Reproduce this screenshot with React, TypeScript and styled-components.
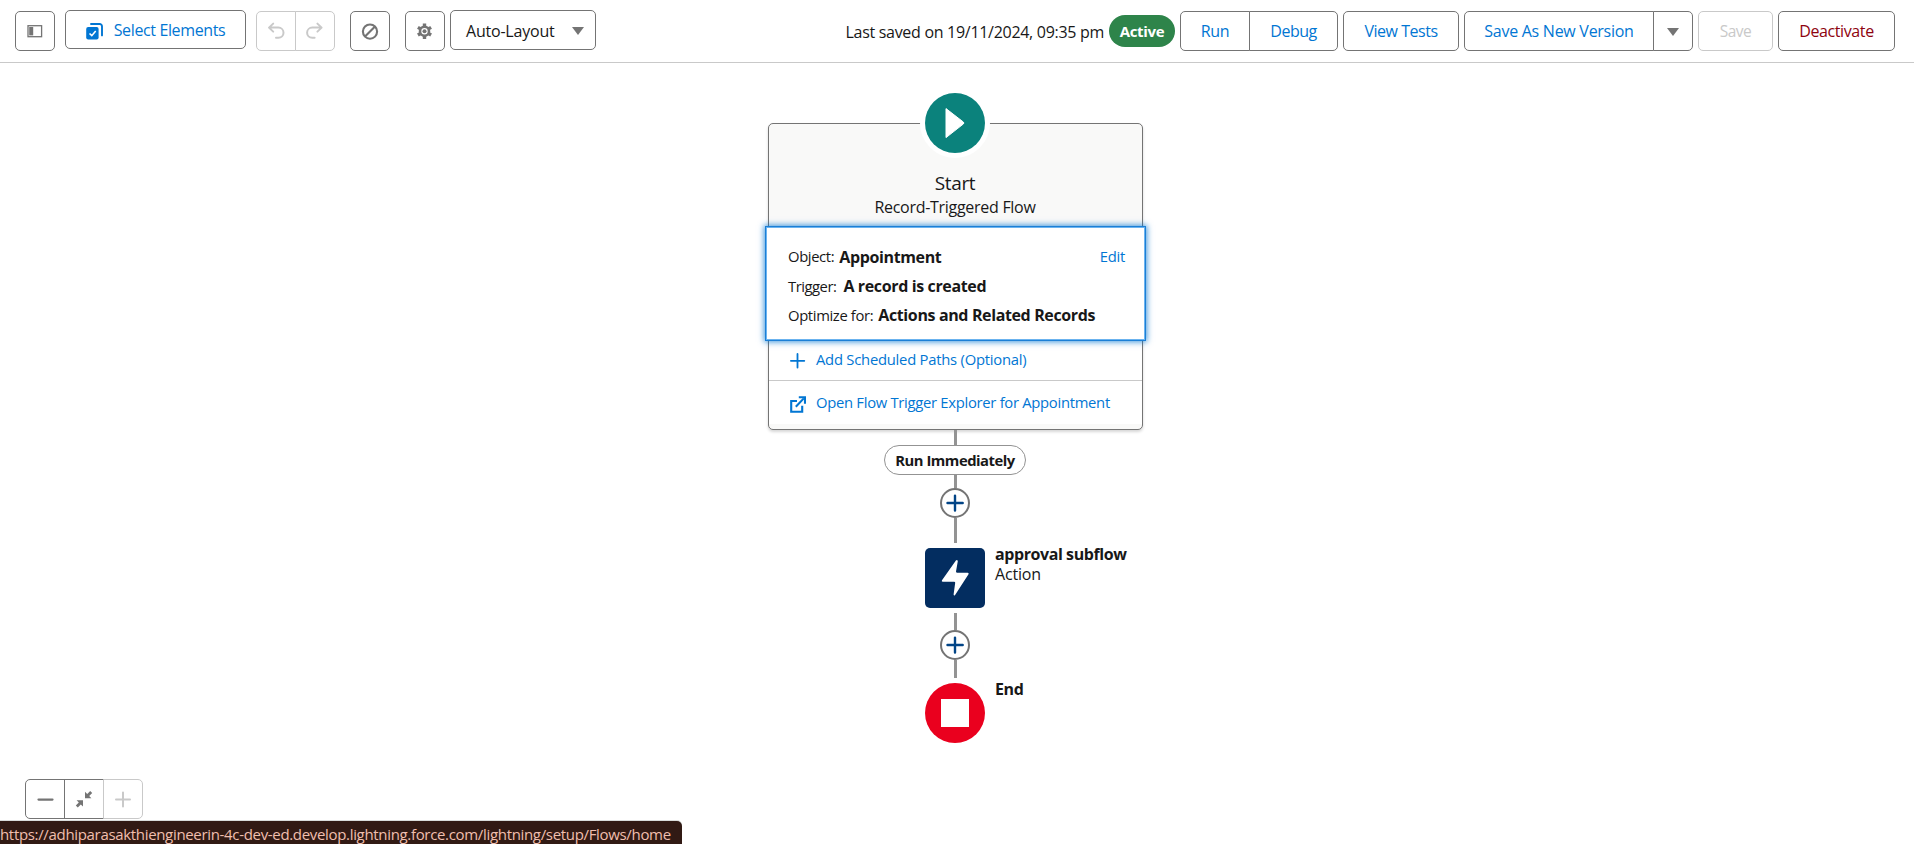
import React from "react";
import styled, { createGlobalStyle } from "styled-components";

const GlobalStyle = createGlobalStyle`
  *, *::before, *::after { box-sizing: border-box; }
  html, body { margin: 0; padding: 0; height: 100%; overflow: hidden; }
  body {
    background: #fff;
    color: #181818;
    font-family: "Open Sans", "Noto Sans", sans-serif;
    font-size: 16px;
    line-height: 24px;
    -webkit-text-size-adjust: 100%;
  }
  button { font: inherit; margin: 0; padding: 0; cursor: pointer; }
`;

const Page = styled.div`
  position: relative;
  display: flex;
  flex-direction: column;
  height: 844px;
  width: 100%;
  overflow: hidden;
`;

/* ---------- toolbar ---------- */

const Toolbar = styled.header`
  display: flex;
  align-items: flex-start;
  justify-content: space-between;
  flex: none;
  height: 63px;
  padding: 10px 19px 0 15px;
  border-bottom: 1px solid #c9c9c9;
`;

const Side = styled.div`
  display: flex;
  align-items: flex-start;
`;

const Button = styled.button<{
  $w: number;
  $h?: number;
  $mt?: number;
  $ml?: number;
  $tone?: "brand" | "disabled" | "danger" | "dark";
  $spacing?: number;
  $size?: number;
}>`
  display: flex;
  align-items: center;
  justify-content: center;
  flex: none;
  width: ${(p) => p.$w}px;
  height: ${(p) => p.$h ?? 40}px;
  margin-top: ${(p) => p.$mt ?? 1}px;
  margin-left: ${(p) => p.$ml ?? 0}px;
  background: #fff;
  border: 1px solid ${(p) => (p.$tone === "disabled" ? "#c9c9c9" : "#747474")};
  border-radius: 5px;
  color: ${(p) =>
    ({ brand: "#0176d3", disabled: "#c9c9c9", danger: "#8e030f", dark: "#181818" })[p.$tone ?? "brand"]};
  font-size: ${(p) => p.$size ?? 16}px;
  letter-spacing: ${(p) => p.$spacing ?? 0}px;
  line-height: 38px;
  white-space: nowrap;
`;

const ButtonGroup = styled.div<{ $ml?: number }>`
  display: flex;
  margin-left: ${(p) => p.$ml ?? 0}px;

  ${Button}:not(:first-child) {
    border-top-left-radius: 0;
    border-bottom-left-radius: 0;
    margin-left: -1px;
  }
  ${Button}:not(:last-child) {
    border-top-right-radius: 0;
    border-bottom-right-radius: 0;
  }
`;

const SelectIcon = styled.svg`
  flex: none;
  margin: 4px 11px 0 0;
`;

const SelectText = styled.span`
  padding-top: 1px;
`;

const ComboText = styled.span`
  flex: 1;
  padding: 1px 0 0 15px;
  text-align: left;
`;

const Caret = styled.span<{ $mr?: number }>`
  flex: none;
  width: 0;
  height: 0;
  margin-right: ${(p) => p.$mr ?? 0}px;
  margin-top: 2px;
  border-left: 6.5px solid transparent;
  border-right: 6.5px solid transparent;
  border-top: 8px solid #747474;
`;

const SavedText = styled.span`
  margin-top: 10px;
  letter-spacing: -0.295px;
  white-space: nowrap;
`;

const Badge = styled.span`
  display: flex;
  align-items: center;
  justify-content: center;
  width: 66px;
  height: 32px;
  margin: 5px 5px 0 5px;
  border-radius: 16px;
  background: #2e844a;
  color: #fff;
  font-size: 15px;
  font-weight: 700;
  letter-spacing: -0.34px;
`;

/* ---------- canvas ---------- */

const Canvas = styled.main`
  display: flex;
  flex-direction: column;
  align-items: center;
  flex: 1;
  width: 1911px;
  padding-top: 60px;
`;

const StartCard = styled.section`
  display: flex;
  flex-direction: column;
  flex: none;
  width: 375px;
  height: 307px;
  border: 1px solid #747474;
  border-radius: 5px;
  background: #f9f9f8;
  box-shadow: 0 2px 3px rgba(0, 0, 0, 0.16);
`;

const StartHeader = styled.div`
  display: flex;
  flex-direction: column;
  align-items: center;
  flex: none;
  height: 102px;
  border-radius: 4px 4px 0 0;
`;

const StartBadge = styled.div`
  display: flex;
  flex: none;
  width: 70px;
  height: 70px;
  margin: -36px 1px 13px 0;
  border: 5px solid #fff;
  border-radius: 50%;
  background: #fff;
`;

const Title = styled.div`
  margin-right: 1px;
  font-size: 19px;
  letter-spacing: -0.35px;
`;

const Subtitle = styled.div`
  margin-right: 1px;
  letter-spacing: -0.288px;
`;

const Trigger = styled.div`
  position: relative;
  display: flex;
  flex-direction: column;
  gap: 5px;
  flex: none;
  width: 381px;
  height: 115px;
  margin-left: -4px;
  padding: 16px 20px 0 21px;
  border: 1px solid #1b7fd6;
  outline: 0;
  background: #fff;
  box-shadow: inset 0 0 0 1px #6bb3ef, 0 0 6px 1px rgba(1, 118, 211, 0.75);
`;

const TriggerRow = styled.div`
  display: flex;
  height: 24px;
  padding-left: 1px;
  white-space: nowrap;

  &:first-child {
    margin: 1px 0 1px;
  }
`;

const Label = styled.span<{ $spacing: number }>`
  font-size: 14.8px;
  letter-spacing: ${(p) => p.$spacing}px;
`;

const Value = styled.span<{ $ml: number; $mt?: number; $spacing: number }>`
  margin-left: ${(p) => p.$ml}px;
  margin-top: ${(p) => p.$mt ?? 0}px;
  font-weight: 700;
  letter-spacing: ${(p) => p.$spacing}px;
`;

const Link = styled.a<{ $spacing: number; $push?: boolean }>`
  margin-left: ${(p) => (p.$push ? "auto" : "0")};
  color: #0176d3;
  font-size: 14.8px;
  letter-spacing: ${(p) => p.$spacing}px;
  white-space: nowrap;
`;

const ActionRow = styled.div<{ $h: number; $pt: number; $line?: boolean }>`
  display: flex;
  flex: none;
  height: ${(p) => p.$h}px;
  padding: ${(p) => p.$pt}px 0 0 20px;
  border-bottom: ${(p) => (p.$line ? "1px solid #c9c9c9" : "none")};
  background: #fff;
`;

const RowIcon = styled.svg`
  flex: none;
  margin: 6px 10px 0 1px;
`;

const Stem = styled.div<{ $h: number; $gap?: number; $before?: number }>`
  flex: none;
  width: 3px;
  height: ${(p) => p.$h}px;
  margin-top: ${(p) => p.$before ?? 0}px;
  margin-bottom: ${(p) => p.$gap ?? 0}px;
  background: #939393;
`;

const PathLabel = styled.div`
  display: flex;
  align-items: center;
  justify-content: center;
  flex: none;
  width: 142px;
  height: 30px;
  margin-right: 1px;
  border: 1px solid #939393;
  border-radius: 15px;
  background: #fff;
  font-size: 14.8px;
  font-weight: 700;
  letter-spacing: -0.48px;
  white-space: nowrap;
`;

const AddButton = styled.button`
  display: flex;
  align-items: center;
  justify-content: center;
  flex: none;
  width: 30px;
  height: 30px;
  margin-right: 1px;
  border: 2px solid #747474;
  border-radius: 50%;
  background: #fff;
`;

const Node = styled.div`
  display: grid;
  grid-template-columns: 300px 60px 300px;
  flex: none;
  height: 60px;
  margin-right: 1px;
`;

const NodeIcon = styled.div`
  grid-column: 2;
  display: flex;
`;

const NodeText = styled.div`
  margin-top: -4px;
  padding-left: 10px;
  line-height: 20px;
`;

const NodeName = styled.div<{ $spacing: number }>`
  font-weight: 700;
  letter-spacing: ${(p) => p.$spacing}px;
`;

const NodeType = styled.div`
  letter-spacing: -0.17px;
`;

/* ---------- overlays ---------- */

const Zoom = styled.div`
  position: absolute;
  left: 25px;
  bottom: 25px;
  display: flex;
`;

const StatusBar = styled.div`
  position: absolute;
  left: 0;
  bottom: 0;
  width: 682px;
  height: 23px;
  border-top-right-radius: 5px;
  background: #311a14;
  box-shadow: 0 -1px 0 #d9dcda;
  color: #f0bfae;
  font-size: 15px;
  letter-spacing: -0.327px;
  line-height: 27px;
  white-space: nowrap;
`;

const AddNode = () => (
  <AddButton aria-label="Add element">
    <svg width="26" height="26" viewBox="0 0 26 26" stroke="#014486" strokeWidth="2.4" strokeLinecap="round">
      <path d="M13 5.6v15M5.5 13h15.2" />
    </svg>
  </AddButton>
);

export default function App() {
  return (
    <Page>
      <GlobalStyle />
      <Toolbar>
        <Side>
          <Button $w={40} aria-label="Toggle panel">
            <svg width="16" height="14" viewBox="0 0 16 14" fill="none">
              <rect x="1" y="1.7" width="13.6" height="11" stroke="#747474" strokeWidth="1.3" />
              <rect x="2.2" y="3" width="4" height="8.4" fill="#747474" />
            </svg>
          </Button>
          <Button $w={181} $h={39} $mt={0} $ml={10} $spacing={-0.374}>
            <SelectIcon width="17" height="17" viewBox="0 0 17 17">
              <path d="M5 1h8.6a2.4 2.4 0 0 1 2.4 2.4v9" fill="none" stroke="#0176d3" strokeWidth="1.9" strokeLinecap="round" />
              <rect x="0.2" y="4" width="12.4" height="12.6" rx="2" fill="#0176d3" />
              <path d="M3.5 10.5l2.3 2.2 3.9-4.6" fill="none" stroke="#fff" strokeWidth="1.6" />
            </SelectIcon>
            <SelectText>Select Elements</SelectText>
          </Button>
          <ButtonGroup $ml={10}>
            <Button $w={40} $tone="disabled" aria-label="Undo">
              <svg width="18" height="18" viewBox="0 0 18 18" fill="none" stroke="#c9c9c9" strokeWidth="2" strokeLinecap="round" strokeLinejoin="round">
                <path d="M6.2 1.6L2 5.6l4.2 4M2.4 5.6h9a4.8 4.8 0 0 1 0 10.2H9" />
              </svg>
            </Button>
            <Button $w={40} $tone="disabled" aria-label="Redo">
              <svg width="18" height="18" viewBox="0 0 18 18" fill="none" stroke="#c9c9c9" strokeWidth="2" strokeLinecap="round" strokeLinejoin="round">
                <path d="M11.4 1.6l4.2 4-4.2 4M15.2 5.6h-9a4.8 4.8 0 0 0 0 10.2h2.4" />
              </svg>
            </Button>
          </ButtonGroup>
          <Button $w={40} $ml={15} aria-label="Disable">
            <svg width="18" height="18" viewBox="0 0 18 18" fill="none" stroke="#747474" strokeWidth="2.1">
              <circle cx="9" cy="9.6" r="7.1" />
              <path d="M4 14.6L14 4.6" />
            </svg>
          </Button>
          <Button $w={40} $ml={15} aria-label="Settings">
            <svg width="18" height="18" viewBox="0 0 18 18" fill="none">
              <path
                d="M8.5 1.4v3M8.5 14v3M1.9 5.4l2.6 1.5M12.5 11.5l2.6 1.5M1.9 13l2.6-1.5M12.5 6.9l2.6-1.5"
                stroke="#747474"
                strokeWidth="3.4"
              />
              <circle cx="8.5" cy="9.2" r="4.5" stroke="#747474" strokeWidth="2.6" />
              <circle cx="8.5" cy="9.2" r="2" fill="#747474" />
            </svg>
          </Button>
          <Button $w={146} $mt={0} $ml={5} $tone="dark" $spacing={-0.21}>
            <ComboText>Auto-Layout</ComboText>
            <Caret $mr={11} />
          </Button>
        </Side>
        <Side>
          <SavedText>Last saved on 19/11/2024, 09:35 pm</SavedText>
          <Badge>Active</Badge>
          <ButtonGroup>
            <Button $w={70} $spacing={-0.4}>Run</Button>
            <Button $w={89} $spacing={-0.5}>Debug</Button>
          </ButtonGroup>
          <Button $w={116} $ml={5} $spacing={-0.47}>View Tests</Button>
          <ButtonGroup $ml={5}>
            <Button $w={190} $spacing={-0.27}>Save As New Version</Button>
            <Button $w={40} aria-label="More save options"><Caret /></Button>
          </ButtonGroup>
          <Button $w={75} $ml={5} $tone="disabled" $size={15.5} $spacing={-0.53}>Save</Button>
          <Button $w={117} $ml={5} $tone="danger" $spacing={-0.386}>Deactivate</Button>
        </Side>
      </Toolbar>

      <Canvas>
        <StartCard>
          <StartHeader>
            <StartBadge>
              <svg width="60" height="60" viewBox="0 0 60 60">
                <circle cx="30" cy="30" r="30" fill="#0b827c" />
                <path d="M21 15.6l17.3 13.4q1.2 1 0 2L21 44.6z" fill="#fff" stroke="#fff" strokeWidth="1" strokeLinejoin="round" />
              </svg>
            </StartBadge>
            <Title>Start</Title>
            <Subtitle>Record-Triggered Flow</Subtitle>
          </StartHeader>
          <Trigger>
            <TriggerRow>
              <Label $spacing={-0.38}>Object:</Label>
              <Value $ml={5} $mt={1} $spacing={-0.36}>Appointment</Value>
              <Link $push $spacing={-0.25}>Edit</Link>
            </TriggerRow>
            <TriggerRow>
              <Label $spacing={-0.48}>Trigger:</Label>
              <Value $ml={7} $spacing={-0.366}>A record is created</Value>
            </TriggerRow>
            <TriggerRow>
              <Label $spacing={-0.36}>Optimize for:</Label>
              <Value $ml={5} $spacing={-0.37}>Actions and Related Records</Value>
            </TriggerRow>
          </Trigger>
          <ActionRow $h={40} $pt={6} $line>
            <RowIcon width="16" height="16" viewBox="0 0 16 16" stroke="#0176d3" strokeWidth="1.8" strokeLinecap="round">
              <path d="M7.5 1v13.6M0.9 7.8h13.4" />
            </RowIcon>
            <Link $spacing={-0.24}>Add Scheduled Paths (Optional)</Link>
          </ActionRow>
          <ActionRow $h={43} $pt={9}>
            <RowIcon width="16" height="17" viewBox="0 0 16 17" fill="none" stroke="#0176d3" strokeWidth="2.1">
              <path d="M7 5H1.2v10.8h11V9.8M5.8 10.8l8-8.4" />
              <path d="M8.8 1.3h6.2v6.5" />
            </RowIcon>
            <Link $spacing={-0.29}>Open Flow Trigger Explorer for Appointment</Link>
          </ActionRow>
        </StartCard>

        <Stem $h={15} />
        <PathLabel>Run Immediately</PathLabel>
        <Stem $h={13} />
        <AddNode />
        <Stem $h={25} $gap={5} />

        <Node>
          <NodeIcon>
            <svg width="60" height="60" viewBox="0 0 60 60">
              <rect width="60" height="60" rx="5" fill="#032d60" />
              <path
                d="M30.9 12.6L17 32.3q-.8 1.4.7 1.4h11.4q1.1 0 1.1 1.1L28.6 46.6q.4 1.8 1.5.4L43.5 26.2q.7-1.5-.8-1.5H32q-1.1 0-1-1.1l1.8-10.4q-.5-1.8-1.9-.6z"
                fill="#fff"
              />
            </svg>
          </NodeIcon>
          <NodeText>
            <NodeName $spacing={-0.42}>approval subflow</NodeName>
            <NodeType>Action</NodeType>
          </NodeText>
        </Node>

        <Stem $h={17} $before={5} />
        <AddNode />
        <Stem $h={18} $gap={5} />

        <Node>
          <NodeIcon>
            <svg width="60" height="60" viewBox="0 0 60 60">
              <circle cx="30" cy="30" r="30" fill="#ea001e" />
              <rect x="16" y="16" width="28" height="28" fill="#fff" />
            </svg>
          </NodeIcon>
          <NodeText>
            <NodeName $spacing={-0.388}>End</NodeName>
          </NodeText>
        </Node>
      </Canvas>

      <Zoom>
        <ButtonGroup>
          <Button $w={40} $mt={0} aria-label="Zoom out">
            <svg width="18" height="18" viewBox="0 0 18 18" stroke="#747474" strokeWidth="2.2" strokeLinecap="round">
              <path d="M2.5 9.6h14" />
            </svg>
          </Button>
          <Button $w={40} $mt={0} aria-label="Zoom to fit">
            <svg width="18" height="18" viewBox="0 0 18 18" fill="#747474">
              <path d="M10 1.8v6.4h6.4l-2.2-2.2 3-3-2-2-3 3zM8 16.6v-6.4H1.6l2.2 2.2-3 3 2 2 3-3z" />
            </svg>
          </Button>
          <Button $w={40} $mt={0} $tone="disabled" aria-label="Zoom in">
            <svg width="18" height="18" viewBox="0 0 18 18" stroke="#c9c9c9" strokeWidth="2" strokeLinecap="round">
              <path d="M9 2.4v14M2 9.4h14" />
            </svg>
          </Button>
        </ButtonGroup>
      </Zoom>

      <StatusBar>
        https://adhiparasakthiengineerin-4c-dev-ed.develop.lightning.force.com/lightning/setup/Flows/home
      </StatusBar>
    </Page>
  );
}
